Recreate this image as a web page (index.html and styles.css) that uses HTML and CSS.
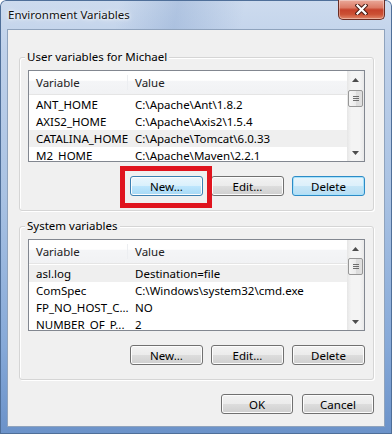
FILE: index.html
```html
<!DOCTYPE html>
<html>
  <head>
    <title>Environment Variables</title>
    <link rel="stylesheet" href="styles.css">
  </head>
  <body>
    <div class="window">
      <div class="titlebar">
        <span class="title">Environment Variables</span>
        <div class="close">
          <svg width="13" height="11" viewBox="0 0 13 11">
            <path d="M2.5 1.5 L10.5 9.5 M10.5 1.5 L2.5 9.5" stroke="#4a1c14" stroke-width="4.2" stroke-linecap="square" fill="none" />
            <path d="M2.5 1.5 L10.5 9.5 M10.5 1.5 L2.5 9.5" stroke="#ffffff" stroke-width="2.2" stroke-linecap="square" fill="none" />
          </svg>
        </div>
      </div>

      <div class="client">
        <div class="group">
          <div class="group-label">User variables for Michael</div>
          <div class="listbox">
            <div class="list-main">
              <div class="list-head">
                <span class="col-name">Variable</span>
                <span class="col-value">Value</span>
              </div>
              <div class="row"><span class="col-name">ANT_HOME</span><span class="col-value">C:\Apache\Ant\1.8.2</span></div>
              <div class="row"><span class="col-name">AXIS2_HOME</span><span class="col-value">C:\Apache\Axis2\1.5.4</span></div>
              <div class="row row-selected"><span class="col-name">CATALINA_HOME</span><span class="col-value">C:\Apache\Tomcat\6.0.33</span></div>
              <div class="row"><span class="col-name">M2_HOME</span><span class="col-value">C:\Apache\Maven\2.2.1</span></div>
            </div>
            <div class="scrollbar">
              <div class="sb-btn">
                <svg width="7" height="4" viewBox="0 0 7 4"><path d="M0 4 L3.5 0 L7 4 Z" fill="#4d4d4d" /></svg>
              </div>
              <div class="sb-track">
                <div class="sb-thumb thumb-user">
                  <span class="grip"></span><span class="grip"></span><span class="grip"></span>
                </div>
              </div>
              <div class="sb-btn">
                <svg width="7" height="4" viewBox="0 0 7 4"><path d="M0 0 L7 0 L3.5 4 Z" fill="#4d4d4d" /></svg>
              </div>
            </div>
          </div>
          <div class="buttons">
            <div class="btn-wrap">
              <button class="btn btn-hot">New...</button>
              <div class="callout"></div>
            </div>
            <button class="btn">Edit...</button>
            <button class="btn btn-default">Delete</button>
          </div>
        </div>

        <div class="group group-system">
          <div class="group-label">System variables</div>
          <div class="listbox">
            <div class="list-main">
              <div class="list-head">
                <span class="col-name">Variable</span>
                <span class="col-value">Value</span>
              </div>
              <div class="row row-selected"><span class="col-name">asl.log</span><span class="col-value">Destination=file</span></div>
              <div class="row"><span class="col-name">ComSpec</span><span class="col-value">C:\Windows\system32\cmd.exe</span></div>
              <div class="row"><span class="col-name">FP_NO_HOST_C...</span><span class="col-value">NO</span></div>
              <div class="row"><span class="col-name">NUMBER_OF_P...</span><span class="col-value">2</span></div>
            </div>
            <div class="scrollbar">
              <div class="sb-btn">
                <svg width="7" height="4" viewBox="0 0 7 4"><path d="M0 4 L3.5 0 L7 4 Z" fill="#4d4d4d" /></svg>
              </div>
              <div class="sb-track">
                <div class="sb-thumb thumb-system">
                  <span class="grip"></span><span class="grip"></span><span class="grip"></span>
                </div>
              </div>
              <div class="sb-btn">
                <svg width="7" height="4" viewBox="0 0 7 4"><path d="M0 0 L7 0 L3.5 4 Z" fill="#4d4d4d" /></svg>
              </div>
            </div>
          </div>
          <div class="buttons">
            <button class="btn">New...</button>
            <button class="btn">Edit...</button>
            <button class="btn">Delete</button>
          </div>
        </div>

        <div class="footer">
          <button class="btn">OK</button>
          <button class="btn">Cancel</button>
        </div>
      </div>
    </div>
  </body>
</html>
```

FILE: styles.css
```css
body {
  margin: 0;
  font-family: "Noto Sans", "Open Sans", sans-serif;
  font-size: 11.5px;
  color: #000;
}
.window {
  width: 392px;
  height: 434px;
  box-sizing: border-box;
  padding: 0 7px 7px;
  display: flex;
  flex-direction: column;
  background:
    linear-gradient(100deg, rgba(255, 255, 255, 0) 30%, rgba(80, 120, 180, 0.22) 45%, rgba(255, 255, 255, 0) 62%) top / 100% 29px no-repeat,
    linear-gradient(to bottom, #cddbee, #bfd1ea 12%, #a9c2e3 45%, #86a9d8 80%, #6b92c9);
  box-shadow: inset 0 0 0 1px #4f6f99;
  border-radius: 6px 6px 0 0;
}
.titlebar {
  height: 29px;
  display: flex;
  justify-content: space-between;
  align-items: flex-start;
  flex-shrink: 0;
}
.title {
  margin-top: 7px;
  padding-left: 1px;
  line-height: 16px;
  font-size: 11.5px;
  color: #111;
  text-shadow: 0 0 6px #fff, 0 0 3px #fff;
}
.close {
  width: 47px;
  height: 20px;
  box-sizing: border-box;
  border: 1px solid #6a2c22;
  border-top: none;
  border-radius: 0 0 5px 5px;
  background: linear-gradient(#eaa99a, #dc7b66 40%, #c6422b 52%, #cb5034 75%, #e1876a);
  box-shadow: inset 0 0 0 1px rgba(255, 255, 255, 0.35);
  display: flex;
  align-items: center;
  justify-content: center;
}
.client {
  flex: 1;
  background: #f0f0f0;
  border: 1px solid #8fa3bd;
  padding: 27px 10px 0 11px;
}
.group {
  border: 1px solid #d5d5d5;
  border-radius: 3px;
  box-shadow: 1px 1px 0 #fff, inset 1px 1px 0 #fff;
  padding: 0 8px 14px 8px;
}
.group-system {
  margin-top: 15px;
}
.group-label {
  width: fit-content;
  margin: -9px 0 0 -3px;
  padding: 0 2px;
  background: #f0f0f0;
  line-height: 16px;
}
.listbox {
  margin-top: 5px;
  height: 92px;
  box-sizing: border-box;
  border: 1px solid #828790;
  background: #fff;
  display: flex;
  overflow: hidden;
}
.list-main {
  flex: 1;
}
.list-head {
  height: 24px;
  box-sizing: border-box;
  display: flex;
  align-items: center;
  border-bottom: 1px solid #e5e5e5;
  background: linear-gradient(#ffffff, #ffffff 40%, #f4f5f7 45%, #f1f2f4);
  color: #222;
}
.row {
  height: 17px;
  display: flex;
  align-items: center;
  white-space: nowrap;
}
.list-head + .row {
  margin-top: 1px;
}
.row-selected {
  background: #efefef;
}
.col-name {
  width: 99px;
  padding-left: 7px;
  box-sizing: border-box;
  flex-shrink: 0;
}
.col-value {
  padding-left: 7px;
}
.list-head .col-name {
  border-right: 1px solid #eceef1;
}
.scrollbar {
  width: 17px;
  display: flex;
  flex-direction: column;
  background: linear-gradient(to right, #e6e6e6, #f4f4f4 25%, #f4f4f4 75%, #e9e9e9);
}
.sb-btn {
  height: 17px;
  display: flex;
  align-items: center;
  justify-content: center;
  flex-shrink: 0;
}
.sb-track {
  flex: 1;
  padding: 0 1px;
}
.sb-thumb {
  height: 17px;
  box-sizing: border-box;
  border: 1px solid #979797;
  border-radius: 2px;
  background: linear-gradient(to right, #f5f5f5, #ececec 50%, #dcdcdc 50%, #e0e0e0);
  display: flex;
  flex-direction: column;
  align-items: center;
  justify-content: center;
  gap: 1px;
}
.thumb-user {
  margin-top: 2px;
}
.thumb-system {
  margin-top: 1px;
}
.grip {
  width: 6px;
  height: 1px;
  background: #6e6e6e;
}
.buttons {
  margin-top: 14px;
  display: flex;
  justify-content: flex-end;
  gap: 8px;
}
.btn {
  width: 73px;
  height: 20px;
  padding: 0;
  box-sizing: border-box;
  border: 1px solid #707070;
  border-radius: 3px;
  background: linear-gradient(#f2f2f2, #ebebeb 50%, #dddddd 50%, #cfcfcf);
  box-shadow: inset 0 0 0 1px #fcfcfc;
  font-family: "Noto Sans", "Open Sans", sans-serif;
  font-size: 11.5px;
  color: #000;
}
.btn-hot {
  border-color: #3c7fb1;
  background: linear-gradient(#eaf6fd, #d9f0fc 50%, #bee6fd 50%, #a7d9f5);
}
.btn-default {
  border-color: #2d8bc6;
  box-shadow: inset 0 0 0 1px #a8e2fb;
  background: linear-gradient(#e8f4fb, #dcf0fb 50%, #c6e6f7 50%, #b6ddf3);
}
.btn-wrap {
  position: relative;
  display: flex;
}
.callout {
  position: absolute;
  top: -10px;
  left: -10px;
  right: -9px;
  bottom: -12px;
  border: 5px solid #e0141e;
}
.footer {
  margin-top: 14px;
  display: flex;
  justify-content: flex-end;
  gap: 9px;
}
.footer .btn {
  width: 72px;
}
```
